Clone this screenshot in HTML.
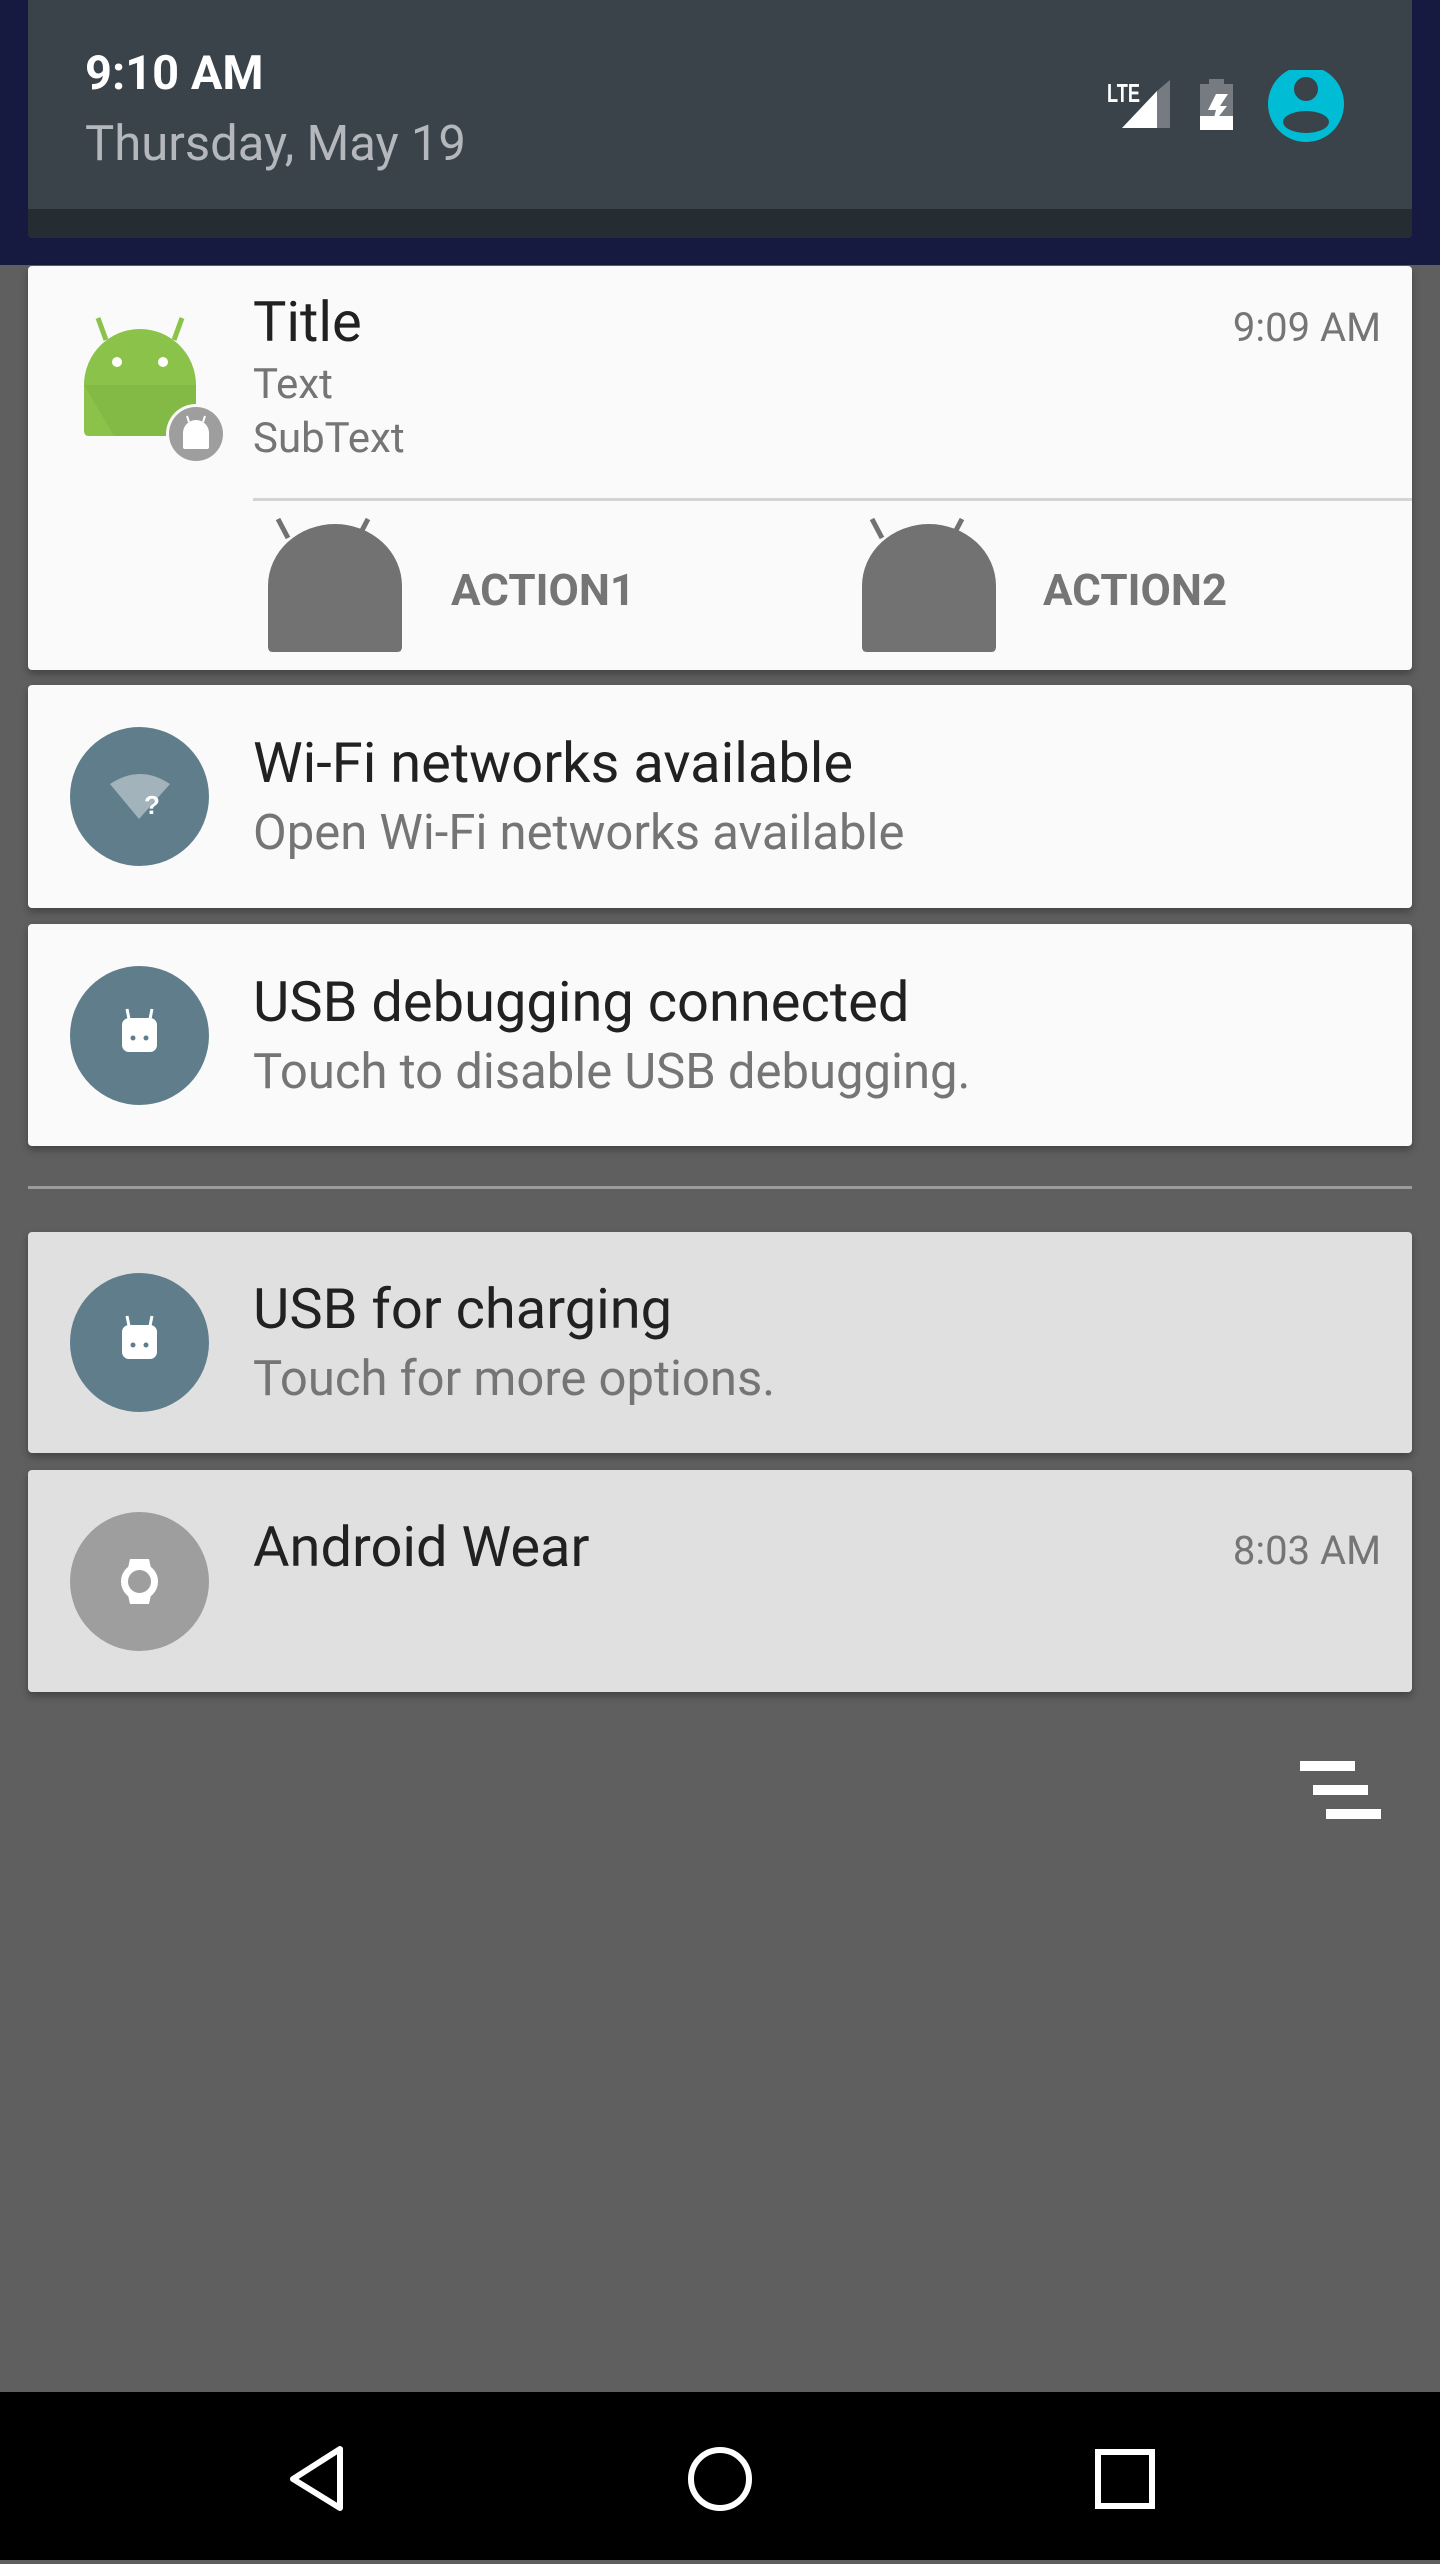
<!DOCTYPE html>
<html><head><meta charset="utf-8"><style>
*{margin:0;padding:0;box-sizing:border-box}
body{width:1440px;height:2560px;background:#5f5f5f;position:relative;overflow:hidden;font-family:"Roboto","Liberation Sans",sans-serif}
.abs{position:absolute}
.card{position:absolute;left:28px;width:1384px;background:#fafafa;border-radius:4px;box-shadow:0 4px 8px rgba(0,0,0,.3)}
.g{background:#e0e0e0}
.t{position:absolute;left:225px;font-size:56px;color:#212121;white-space:nowrap;line-height:1}
.s{position:absolute;left:225px;font-size:49px;color:#757575;white-space:nowrap;line-height:1}
.tm{position:absolute;right:31px;font-size:40px;color:#757575;line-height:1}
.ic{position:absolute;left:42px;width:139px;height:139px;border-radius:50%;background:#607d8b}
</style></head><body>
<div class="abs" style="left:0;top:0;width:1440px;height:265px;background:#171a40"></div>
<div class="abs" style="left:28px;top:0;width:1384px;height:238px;background:#3a424a;border-radius:0 0 4px 4px;overflow:hidden">
 <div class="abs" style="left:0;top:209px;width:1384px;height:29px;background:#252d33"></div>
 <div class="abs" style="left:57px;top:50px;font-size:47px;color:#fff;font-weight:bold;line-height:1">9:10 AM</div>
 <div class="abs" style="left:57px;top:119px;font-size:49px;color:#b4b8bc;line-height:1">Thursday, May 19</div>
</div>
<svg class="abs" style="left:1100px;top:70px" width="250" height="75" viewBox="1100 70 250 75">
 <text x="1107" y="102" font-family="Liberation Sans" font-weight="bold" font-size="26" fill="#fff" textLength="33" lengthAdjust="spacingAndGlyphs">LTE</text>
 <polygon points="1122,128 1157,91 1157,128" fill="#fff"/>
 <polygon points="1157,91 1170,80 1170,128 1157,128" fill="#757b80"/>
 <rect x="1209" y="79" width="15" height="6" fill="#757b80"/>
 <rect x="1200" y="84" width="33" height="32" fill="#757b80"/>
 <rect x="1200" y="116" width="33" height="14" fill="#fff"/>
 <polygon points="1216,94 1228,94 1220,106 1227,106 1212,125 1216,110 1208,110" fill="#fff"/>
 <circle cx="1306" cy="104" r="38" fill="#00bcd4"/>
 <circle cx="1306" cy="89" r="12" fill="#3a424a"/>
 <ellipse cx="1306" cy="122" rx="23" ry="11" fill="#3a424a"/>
</svg>

<div class="card" style="top:266px;height:404px">
 <svg class="abs" style="left:0;top:0" width="240" height="220">
  <line x1="70" y1="52" x2="78" y2="74" stroke="#8bc34a" stroke-width="5"/>
  <line x1="154" y1="52" x2="146" y2="74" stroke="#8bc34a" stroke-width="5"/>
  <path d="M56 165 L56 119 A56 56 0 0 1 168 119 L168 165 Q168 170 163 170 L61 170 Q56 170 56 165Z" fill="#8bc34a"/>
  <path d="M56 119 L168 119 L168 170 L86 170Z" fill="#7cb342" opacity=".55"/>
  <circle cx="89" cy="96" r="5" fill="#fff"/><circle cx="135" cy="96" r="5" fill="#fff"/>
  <circle cx="168" cy="168" r="30" fill="#fafafa"/>
  <circle cx="168" cy="168" r="27" fill="#9e9e9e"/>
  <path d="M155 181 L155 167 A13 13 0 0 1 181 167 L181 181 Q181 183 179 183 L157 183 Q155 183 155 181Z" fill="#fff"/>
  <line x1="159" y1="150" x2="161" y2="156" stroke="#fff" stroke-width="2"/>
  <line x1="177" y1="150" x2="175" y2="156" stroke="#fff" stroke-width="2"/>
 </svg>
 <div class="t" style="top:28px">Title</div>
 <div class="tm" style="top:42px">9:09 AM</div>
 <div class="s" style="top:98px;font-size:42px">Text</div>
 <div class="s" style="top:152px;font-size:42px">SubText</div>
 <div class="abs" style="left:225px;top:232px;width:1159px;height:3px;background:#d4d4d4"></div>
 <svg class="abs" style="left:240px;top:250px" width="140" height="140" viewBox="0 0 140 140">
  <line x1="10" y1="3" x2="20" y2="22" stroke="#727272" stroke-width="5"/>
  <line x1="100" y1="3" x2="90" y2="22" stroke="#727272" stroke-width="5"/>
  <path d="M0 131 L0 70 A67 62 0 0 1 134 70 L134 131 Q134 136 129 136 L5 136 Q0 136 0 131Z" fill="#727272"/>
 </svg>
 <div class="abs" style="left:423px;top:302px;font-size:44px;font-weight:bold;color:#757575;line-height:1">ACTION1</div>
 <svg class="abs" style="left:834px;top:250px" width="140" height="140" viewBox="0 0 140 140">
  <line x1="10" y1="3" x2="20" y2="22" stroke="#727272" stroke-width="5"/>
  <line x1="100" y1="3" x2="90" y2="22" stroke="#727272" stroke-width="5"/>
  <path d="M0 131 L0 70 A67 62 0 0 1 134 70 L134 131 Q134 136 129 136 L5 136 Q0 136 0 131Z" fill="#727272"/>
 </svg>
 <div class="abs" style="left:1015px;top:302px;font-size:44px;font-weight:bold;color:#757575;line-height:1">ACTION2</div>
</div>

<div class="card" style="top:685px;height:223px">
 <div class="ic" style="top:42px"><svg width="139" height="139" viewBox="0 0 139 139"><path d="M40 57 Q70 37 100 57 L69 92Z" fill="#a3b3bb"/><text x="74" y="87" font-family="Liberation Sans" font-weight="bold" font-size="26" fill="#fff">?</text></svg></div>
 <div class="t" style="top:50px">Wi-Fi networks available</div>
 <div class="s" style="top:123px">Open Wi-Fi networks available</div>
</div>

<div class="card" style="top:924px;height:222px">
 <div class="ic" style="top:42px"><svg width="139" height="139" viewBox="0 0 139 139"><line x1="57" y1="43" x2="59" y2="53" stroke="#fff" stroke-width="3"/><line x1="82" y1="43" x2="80" y2="53" stroke="#fff" stroke-width="3"/><rect x="52" y="52" width="35" height="34" rx="7" fill="#fff"/><circle cx="63" cy="72" r="2.5" fill="#607d8b"/><circle cx="76" cy="72" r="2.5" fill="#607d8b"/></svg></div>
 <div class="t" style="top:50px">USB debugging connected</div>
 <div class="s" style="top:123px">Touch to disable USB debugging.</div>
</div>

<div class="abs" style="left:28px;top:1186px;width:1384px;height:3px;background:#9c9c9c"></div>

<div class="card g" style="top:1232px;height:221px">
 <div class="ic" style="top:41px"><svg width="139" height="139" viewBox="0 0 139 139"><line x1="57" y1="43" x2="59" y2="53" stroke="#fff" stroke-width="3"/><line x1="82" y1="43" x2="80" y2="53" stroke="#fff" stroke-width="3"/><rect x="52" y="52" width="35" height="34" rx="7" fill="#fff"/><circle cx="63" cy="72" r="2.5" fill="#607d8b"/><circle cx="76" cy="72" r="2.5" fill="#607d8b"/></svg></div>
 <div class="t" style="top:49px">USB for charging</div>
 <div class="s" style="top:122px">Touch for more options.</div>
</div>

<div class="card g" style="top:1470px;height:222px">
 <div class="ic" style="top:42px;background:#9e9e9e"><svg width="139" height="139" viewBox="0 0 139 139"><path d="M60 47 L79 47 L81 56 L58 56Z M58 83 L81 83 L79 92 L60 92Z" fill="#fff"/><circle cx="69.5" cy="69.5" r="15" fill="none" stroke="#fff" stroke-width="7"/></svg></div>
 <div class="t" style="top:49px">Android Wear</div>
 <div class="tm" style="top:61px">8:03 AM</div>
</div>

<div class="abs" style="left:1300px;top:1761px;width:55px;height:10px;background:#fff"></div>
<div class="abs" style="left:1313px;top:1785px;width:55px;height:10px;background:#fff"></div>
<div class="abs" style="left:1326px;top:1809px;width:55px;height:10px;background:#fff"></div>

<div class="abs" style="left:0;top:2392px;width:1440px;height:168px;background:#000">
 <svg width="1440" height="168" viewBox="0 2392 1440 168">
  <polygon points="340,2449 340,2508 293,2479" fill="none" stroke="#fff" stroke-width="6" stroke-linejoin="round"/>
  <circle cx="720" cy="2479" r="29" fill="none" stroke="#fff" stroke-width="6"/>
  <rect x="1098" y="2452" width="54" height="54" fill="none" stroke="#fff" stroke-width="6"/>
 </svg>
</div>
</body></html>
